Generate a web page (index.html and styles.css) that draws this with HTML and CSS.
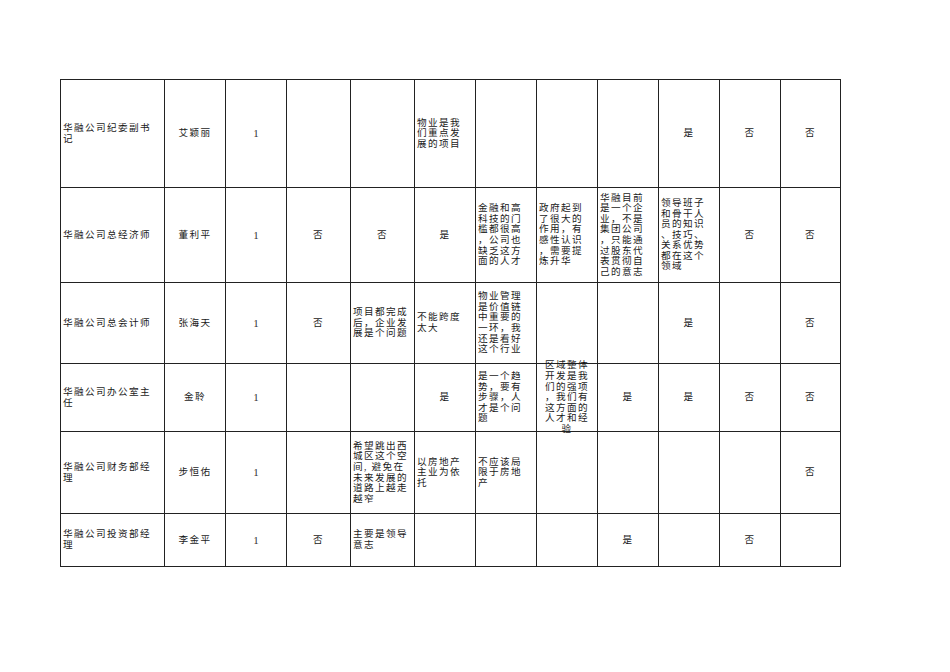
FILE: index.html
```html
<!DOCTYPE html>
<html lang="zh-CN">
<head>
<meta charset="utf-8">
<link rel="stylesheet" href="styles.css">
</head>
<body>
<table class="sheet">
<colgroup>
<col class="c-title"><col class="c61"><col class="c61"><col class="c64"><col class="c64">
<col class="c61"><col class="c61"><col class="c61"><col class="c61"><col class="c61"><col class="c61"><col class="c60">
</colgroup>
<tr class="r1">
<td class="l">华融公司纪委副书<br>记</td><td>艾颖丽</td><td class="n">1</td><td></td><td></td>
<td class="l">物业是我<br>们重点发<br>展的项目</td><td></td><td></td><td></td><td>是</td><td>否</td><td>否</td>
</tr>
<tr class="r2">
<td class="l">华融公司总经济师</td><td>董利平</td><td class="n">1</td><td>否</td><td>否</td><td>是</td>
<td class="l">金融和高<br>科技的门<br>槛都很高<br>，公司也<br>缺乏这方<br>面的人才</td>
<td class="l">政府起到<br>了很大的<br>作用，有<br>感性认识<br>，需要提<br>炼升华</td>
<td class="l">华融目前<br>是一个企<br>业，不是<br>集团公司<br>，只能通<br>过股东代<br>表贯彻自<br>己的意志</td>
<td class="l">领导班子<br>和骨干人<br>员的知识<br>、技巧、<br>关系优势<br>都在这个<br>领域</td>
<td>否</td><td>否</td>
</tr>
<tr class="r3">
<td class="l">华融公司总会计师</td><td>张海天</td><td class="n">1</td><td>否</td>
<td class="l">项目都完成<br>后，企业发<br>展是个问题</td>
<td class="l">不能跨度<br>太大</td>
<td class="l">物业管理<br>是价值链<br>中重要的<br>一环，我<br>还是看好<br>这个行业</td>
<td></td><td></td><td>是</td><td></td><td>否</td>
</tr>
<tr class="r4">
<td class="l">华融公司办公室主<br>任</td><td>金聆</td><td class="n">1</td><td></td><td></td><td>是</td>
<td class="l">是一个趋<br>势，要有<br>步骤，人<br>才是个问<br>题</td>
<td class="spillcell"><div class="spill"><div>区域整体<br>开发是我<br>们的强项<br>，我们有<br>这方面的<br>人才和经<br>验</div></div></td>
<td>是</td><td>是</td><td>否</td><td>否</td>
</tr>
<tr class="r5">
<td class="l">华融公司财务部经<br>理</td><td>步恒佑</td><td class="n">1</td><td></td>
<td class="l">希望跳出西<br>城区这个空<br>间, 避免在<br>未来发展的<br>道路上越走<br>越窄</td>
<td class="l">以房地产<br>主业为依<br>托</td>
<td class="l">不应该局<br>限于房地<br>产</td>
<td></td><td></td><td></td><td></td><td>否</td>
</tr>
<tr class="r6">
<td class="l">华融公司投资部经<br>理</td><td>李金平</td><td class="n">1</td><td>否</td>
<td class="l">主要是领导<br>意志</td>
<td></td><td></td><td></td><td>是</td><td></td><td>否</td><td></td>
</tr>
</table>
</body>
</html>
```
FILE: styles.css
```css
html, body {
  margin: 0;
  padding: 0;
  background: #fff;
}
body {
  font-family: "Liberation Serif", "Noto Sans CJK SC", serif;
  font-size: 9.6px;
  letter-spacing: 1.4px;
  color: #1a1a1a;
}
.sheet {
  margin: 79px 0 0 60px;
  border-collapse: collapse;
  table-layout: fixed;
  width: 781px;
}
.c-title { width: 104px; }
.c61 { width: 61px; }
.c64 { width: 64px; }
.c60 { width: 60px; }
.sheet td {
  border: 1px solid #222;
  padding: 0 2px;
  text-align: center;
  vertical-align: middle;
  line-height: 10.6px;
  overflow: visible;
  white-space: nowrap;
}
.sheet td.l {
  text-align: left;
}
.sheet td.n {
  font-size: 11px;
  letter-spacing: 0;
  color: #333;
}
.r1 { height: 108px; }
.r2 { height: 95px; }
.r3 { height: 81px; }
.r4 { height: 68px; }
.r5 { height: 82px; }
.r6 { height: 53px; }
.spill {
  height: 60px;
  display: flex;
  align-items: center;
  justify-content: center;
  text-align: center;
}
```
